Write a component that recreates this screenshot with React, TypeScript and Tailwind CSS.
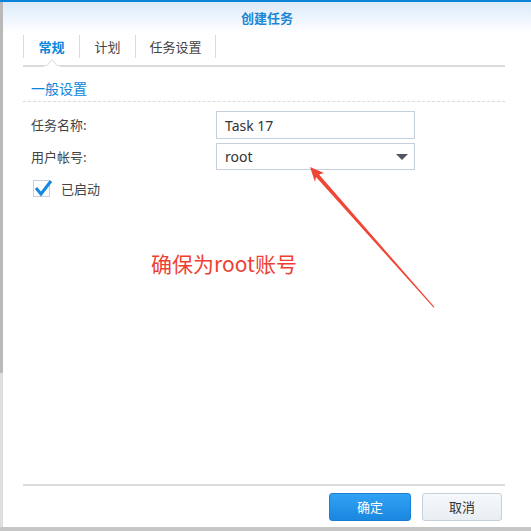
import React from 'react';

const cjk = { fontFamily: '"Noto Sans CJK SC", "Noto Sans", sans-serif' };
const latin = { fontFamily: '"Noto Sans", "Noto Sans CJK SC", sans-serif' };

const tabs = [
  { label: '常规', width: 'w-[56px]', active: true },
  { label: '计划', width: 'w-[56px]', active: false },
  { label: '任务设置', width: 'w-[80px]', active: false },
];

const Tabs: React.FC = () => (
  <div className="relative pt-[2px] pb-[7px] border-b-2 border-[#dadada]">
    <div className="flex h-[23px] border-l border-[#d5dde6]">
      {tabs.map((t) => (
        <div
          key={t.label}
          className={`${t.width} flex items-center justify-center border-r border-[#d5dde6] text-[13px] ${
            t.active ? 'text-[#0b86dc] font-bold' : 'text-[#444]'
          }`}
        >
          {t.label}
        </div>
      ))}
    </div>
    {/* little notch under the active tab */}
    <svg className="absolute left-[21px] -bottom-[2px]" width="16" height="9" viewBox="0 0 16 9">
      <polygon points="0,9 0,7 3,7 8,1 13,7 16,7 16,9" fill="#fff" />
      <polyline points="0,7.5 3,7.5 8,1.5 13,7.5 16,7.5" fill="none" stroke="#dadada" strokeWidth="1" />
    </svg>
  </div>
);

const Field: React.FC<{ label: string; children: React.ReactNode; className?: string }> = ({ label, children, className }) => (
  <div className={`flex items-center ${className ?? ''}`}>
    <div className="w-[193px] pl-[8px] text-[13px] text-[#444]">{label}</div>
    {children}
  </div>
);

export default function App() {
  return (
    <div className="w-[531px] h-[531px] flex flex-col bg-[#c6c6c6] overflow-hidden relative" style={cjk}>
      <div className="h-[2px] bg-[#0a84d8]" />
      <div className="flex h-[525px]">
        <div className="w-[3px] flex flex-col">
          <div className="h-[371px] bg-[#b9b9b9]" />
          <div className="flex-1 bg-[#dedede]" />
        </div>
        <div className="flex-1 flex flex-col bg-white">
          <div className="h-[31px] flex items-center justify-center bg-gradient-to-b from-[#dbeafa] to-white">
            <span className="text-[13px] font-bold text-[#1f86d6]">创建任务</span>
          </div>

          <div className="ml-[20px] mr-[26px] flex-1 flex flex-col">
            <Tabs />

            <div className="pt-[11px] pb-[3px] pl-[8px] leading-[20px] text-[14px] text-[#0b86dc] border-b border-dashed border-[#d3dde8]">
              一般设置
            </div>

            <Field label="任务名称:" className="mt-[9px]">
              <div className="w-[199px] h-[28px] border border-[#c5d0dc] flex items-center px-[8px] text-[14px] text-[#333]" style={latin}>
                Task 17
              </div>
            </Field>

            <Field label="用户帐号:" className="mt-[4px]">
              <div className="w-[199px] h-[27px] border border-[#c5d0dc] flex items-center justify-between pl-[8px] pr-[6px] text-[14px] text-[#333]" style={latin}>
                <span>root</span>
                <svg width="12" height="6" viewBox="0 0 12 6">
                  <polygon points="0,0 12,0 6,6" fill="#4f5660" />
                </svg>
              </div>
            </Field>

            <div className="mt-[9px] ml-[10px] flex items-center gap-[11px]">
              <div className="relative w-[17px] h-[17px] border border-[#c5d0dc] bg-white">
                <svg className="absolute -left-[1px] -top-[3px]" width="20" height="20" viewBox="0 0 20 20">
                  <polyline points="3,10 8,16 18,3" fill="none" stroke="#1788e0" strokeWidth="3" strokeLinejoin="miter" />
                </svg>
              </div>
              <span className="text-[13px] text-[#444]">已启动</span>
            </div>

            <div className="flex-1" />

            <div className="border-t-2 border-[#dcdcdc] pt-[7px] pb-[6px] pr-[3px] flex justify-end gap-[11px]">
              <button className="w-[82px] h-[28px] rounded-[3px] border border-[#1a7fd2] bg-gradient-to-b from-[#30a2f5] to-[#1b87df] text-white text-[13px]">
                确定
              </button>
              <button className="w-[80px] h-[28px] rounded-[3px] border border-[#c5d0dc] bg-gradient-to-b from-[#f6f8fa] to-[#e9eef3] text-[#333] text-[13px]">
                取消
              </button>
            </div>
          </div>
        </div>
      </div>

      {/* annotation */}
      <div className="absolute left-[151px] top-[250px] text-[21px] leading-[26px] text-[#ef3f34]" style={{ fontFamily: '"Noto Sans CJK SC", "Noto Sans", sans-serif' }}>
        确保为root账号
      </div>
      <svg className="absolute left-0 top-0 pointer-events-none" width="531" height="531" viewBox="0 0 531 531">
        <polygon
          points="310,167 324,173 319,174.5 434.5,307 433.5,307.5 316,177 315,182"
          fill="#f04636"
        />
      </svg>
    </div>
  );
}
